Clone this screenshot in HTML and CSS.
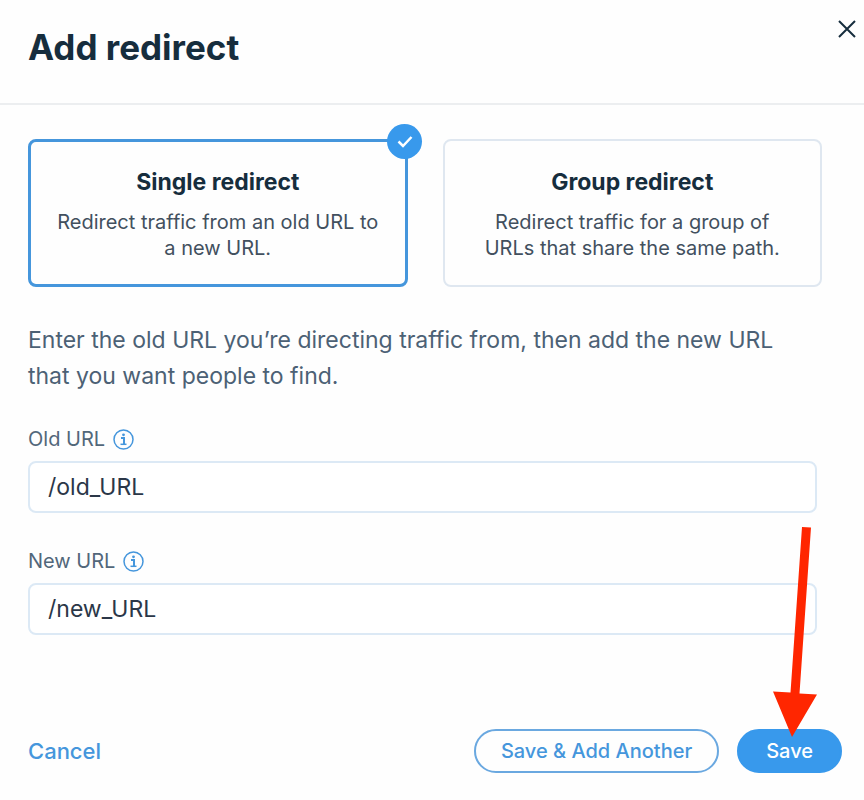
FILE: index.html
```html
<!DOCTYPE html>
<html lang="en">
<head>
<meta charset="utf-8">
<meta name="viewport" content="width=device-width, initial-scale=1">
<title>Add redirect</title>
<link rel="stylesheet" href="styles.css">
</head>
<body>
<form class="dialog">
  <header class="header">
    <h1 class="title">Add redirect</h1>
    <button class="close" type="button" aria-label="Close">
      <svg width="18" height="18" viewBox="0 0 18 18" fill="none" stroke="currentColor" stroke-width="2"><path d="M1 1 17 17M17 1 1 17"/></svg>
    </button>
  </header>
  <main class="body">
    <div class="cards" role="radiogroup" aria-label="Redirect type">
      <label class="card">
        <input class="card-input" type="radio" name="type" checked>
        <span class="card-title">Single redirect</span>
        <span class="card-text">Redirect traffic from an old URL to a new URL.</span>
        <span class="badge"><svg width="35" height="35" viewBox="0 0 35 35" fill="none" stroke="currentColor" stroke-width="2.500"><path d="M11.500 17.500 16 22 24.500 13"/></svg></span>
      </label>
      <label class="card">
        <input class="card-input" type="radio" name="type">
        <span class="card-title">Group redirect</span>
        <span class="card-text">Redirect traffic for a group of URLs that share the same path.</span>
        <span class="badge"><svg width="35" height="35" viewBox="0 0 35 35" fill="none" stroke="currentColor" stroke-width="2.500"><path d="M11.500 17.500 16 22 24.500 13"/></svg></span>
      </label>
    </div>
    <p class="intro">Enter the old URL you’re directing traffic from, then add the new URL that you want people to find.</p>
    <div class="field">
      <div class="field-head">
        <label for="old-url">Old URL</label>
        <svg class="info" width="21" height="21" viewBox="0 0 21 21" fill="none" stroke="currentColor" stroke-width="1.500"><circle cx="10.500" cy="10.500" r="9.500"/><path d="M8 9h3v6.500" stroke-width="2"/><path d="M7.500 15.300h6"/><circle cx="10.500" cy="5.800" r="1.400" fill="currentColor" stroke="none"/></svg>
      </div>
      <input class="input" id="old-url" type="text" value="/old_URL">
    </div>
    <div class="field">
      <div class="field-head">
        <label for="new-url">New URL</label>
        <svg class="info" width="21" height="21" viewBox="0 0 21 21" fill="none" stroke="currentColor" stroke-width="1.500"><circle cx="10.500" cy="10.500" r="9.500"/><path d="M8 9h3v6.500" stroke-width="2"/><path d="M7.500 15.300h6"/><circle cx="10.500" cy="5.800" r="1.400" fill="currentColor" stroke="none"/></svg>
      </div>
      <input class="input" id="new-url" type="text" value="/new_URL">
    </div>
  </main>
  <footer class="footer">
    <button class="cancel" type="button">Cancel</button>
    <button class="button" type="button">Save &amp; Add Another</button>
    <div class="save">
      <button class="button primary" type="submit">Save</button>
      <svg class="arrow" width="46" height="212" viewBox="0 0 46 212" fill="currentColor" aria-hidden="true"><path d="M30 1 39 1.500 27.500 167.500 45 168.500 20 211 1 165.500 18.500 166.500Z"/></svg>
    </div>
  </footer>
</form>
</body>
</html>
```
FILE: styles.css
```css
* {
  box-sizing: border-box;
}

body {
  margin: 0;
  background: #fefefe;
  color: #162d3d;
  font-family: Inter, "Liberation Sans", sans-serif;
}

button,
input {
  font: inherit;
  color: inherit;
}

button {
  border: 0;
  background: none;
  cursor: pointer;
}

.header {
  display: flex;
  justify-content: space-between;
  align-items: flex-start;
  padding: 20px 8px 28px 28px;
  border-bottom: 2px solid #eceef0;
}

.title {
  margin: 0;
  font-size: 35px;
  font-weight: 700;
  line-height: 55px;
}

.close {
  display: flex;
  padding: 0;
}

.body {
  padding: 34px 42px 0 28px;
}

.cards {
  display: grid;
  grid-template-columns: 1fr 1fr;
  gap: 35px;
}

.card {
  position: relative;
  display: flex;
  flex-direction: column;
  align-items: center;
  padding: 28px 24px 24px;
  border: 2px solid #dfe7f0;
  border-radius: 8px;
  text-align: center;
  cursor: pointer;
}

.card:has(:checked) {
  border: 3px solid #4596dc;
  padding: 27px 23px 23px;
}

.card-input {
  position: absolute;
  opacity: 0;
}

.card-title {
  margin-bottom: 14px;
  font-size: 23px;
  font-weight: 700;
  line-height: 26px;
}

.card-text {
  color: #42505e;
  font-size: 20px;
  line-height: 26px;
}

.badge {
  position: absolute;
  top: -18px;
  right: -17px;
  display: none;
  border-radius: 50%;
  background: #3899ec;
  color: #fff;
}

.card:has(:checked) .badge {
  display: flex;
}

.intro {
  margin: 35px 0 29px;
  padding-right: 16px;
  color: #4c6175;
  font-size: 23px;
  line-height: 36px;
}

.field {
  margin: 0 5px 32px 0;
}

.field-head {
  display: flex;
  align-items: center;
  gap: 8px;
  margin-bottom: 6px;
  color: #52677a;
  font-size: 20px;
  line-height: 32px;
}

.info {
  color: #4596dc;
}

.input {
  display: block;
  width: 100%;
  height: 52px;
  padding: 0 18px;
  border: 2px solid #dce9f5;
  border-radius: 8px;
  background: #fff;
  color: #2b3748;
  font-size: 23px;
}

.footer {
  display: flex;
  align-items: center;
  gap: 18px;
  padding: 62px 22px 28px 28px;
}

.cancel {
  margin-right: auto;
  padding: 0;
  color: #4596dc;
  font-size: 22px;
  font-weight: 500;
}

.button {
  height: 44px;
  padding: 0 25px;
  border: 2px solid #6aa8e0;
  border-radius: 22px;
  color: #4596dc;
  font-size: 20px;
  font-weight: 500;
}

.primary {
  padding: 0 27px;
  border-color: #3899ec;
  background: #3899ec;
  color: #fff;
}

.save {
  position: relative;
}

.arrow {
  position: absolute;
  right: 24px;
  bottom: 35px;
  color: #ff2600;
  pointer-events: none;
}
```
